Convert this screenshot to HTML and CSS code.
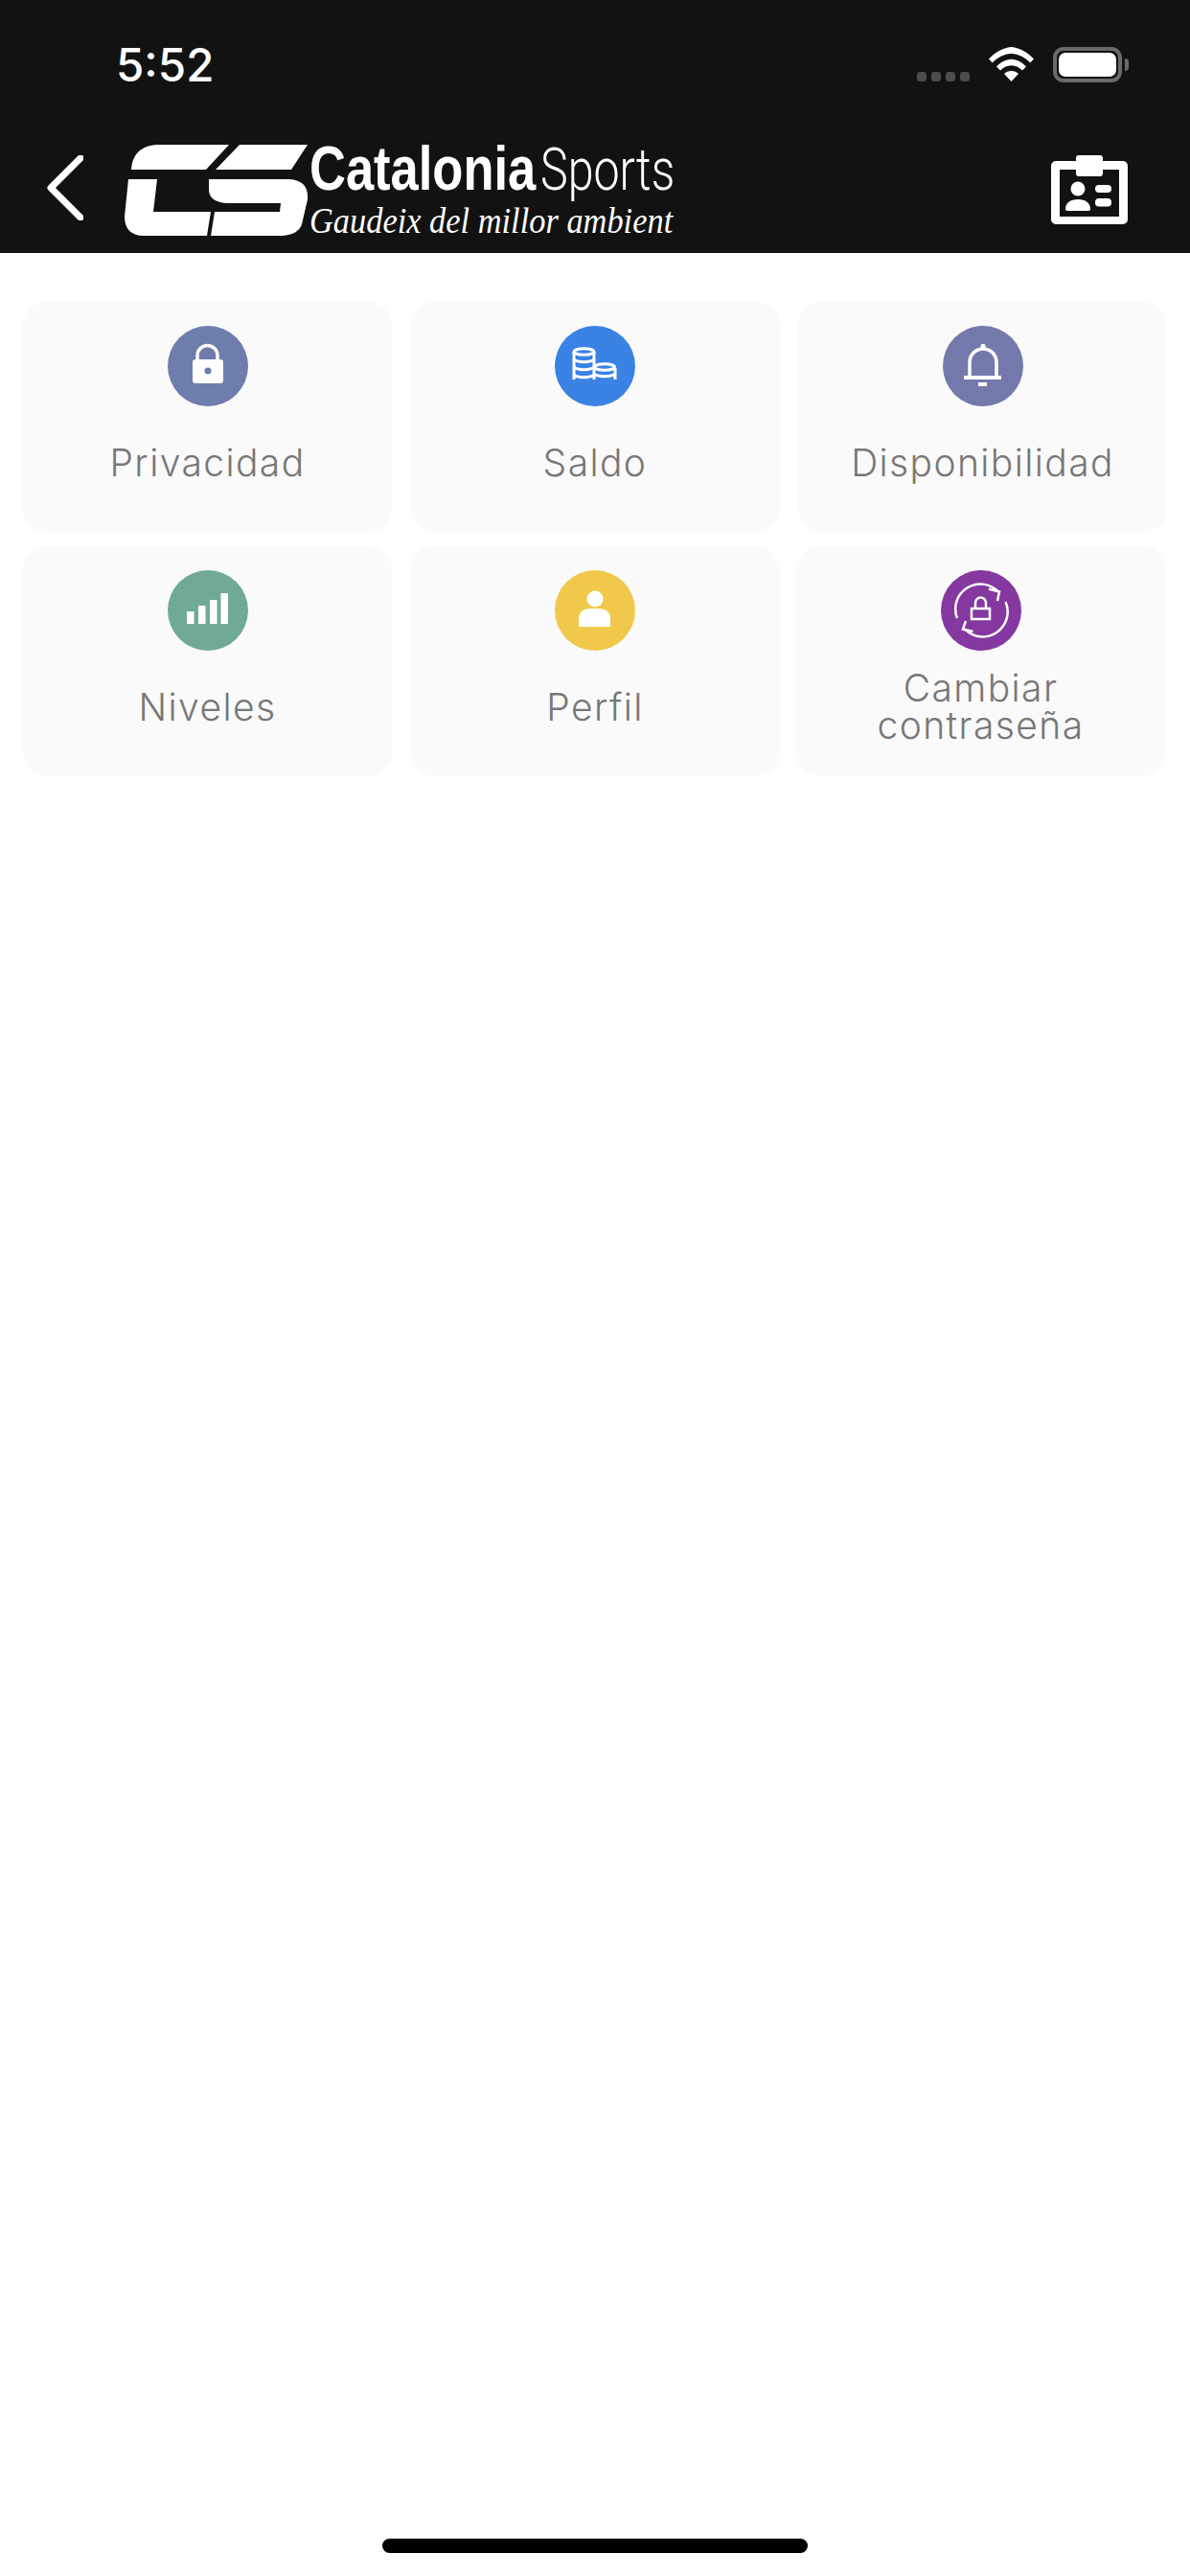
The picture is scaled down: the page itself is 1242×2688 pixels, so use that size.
FILE: index.html
```html
<!DOCTYPE html>
<html lang="es">
<head>
<meta charset="utf-8">
<title>Catalonia Sports</title>
<link rel="stylesheet" href="styles.css">
</head>
<body>
<div class="screen">
  <header class="top">
    <div class="status">
      <span class="time">5:52</span>
      <div class="status-right">
        <div class="dots"><i></i><i></i><i></i><i></i></div>
        <svg class="wifi" viewBox="0 0 47 36" width="47" height="36"><path d="M0 12.5C6 6 14 1 23.5 0 33 1 41 6 47 12.5l-3.7 4C38 11 31 7.2 23.5 7 16 7.2 9 11 3.700 16.500Z" fill="#fff"/><path d="M8 20.500C12 16 17.500 13 23.500 12.700 29.500 13 35 16 39 20.500l-4 4C31.500 21 27.500 19.500 23.500 19.300 19.500 19.500 15.500 21 12 24.500Z" fill="#fff"/><path d="M23.500 25c3 0 5.500 1 7.500 3l-7.500 8-7.500-8c2-2 4.500-3 7.500-3Z" fill="#fff"/></svg>
        <div class="battery"><div class="battery-fill"></div></div>
        <div class="battery-nub"></div>
      </div>
    </div>
    <nav class="nav">
      <svg class="back" viewBox="0 0 38 68" width="38" height="68"><path d="M35 3 4 34l31 31" fill="none" stroke="#fff" stroke-width="7" stroke-linecap="round" stroke-linejoin="round"/></svg>
      <div class="logo">
        <svg class="cs" viewBox="0 0 192 96" width="192" height="96">
          <g fill="#fff">
            <path d="M7 27C8 10 18 2 34 1H109L85 27Z"/>
            <path d="M4 37H34L30 71H90L86 96H20C6 96 0 88 0 76Z"/>
            <path d="M120 1H191L174 27H95Z"/>
            <path d="M88 37H172C186 38 192 45 191 58L185 84C183 91 175 96 163 96H90L94 71H162L163 62H106C94 61 88 56 88 48Z"/>
          </g>
        </svg>
        <div class="wordmark">
          <div class="brand"><span class="brand-a">Catalonia</span><span class="brand-b">Sports</span></div>
          <div class="tagline">Gaudeix del millor ambient</div>
        </div>
      </div>
      <svg class="idcard" viewBox="0 0 80 72" width="80" height="72">
        <path fill-rule="evenodd" fill="#fff" d="M5 6H26V3A3 3 0 0 1 29 0H51A3 3 0 0 1 54 3V6H75A5 5 0 0 1 80 11V67A5 5 0 0 1 75 72H5A5 5 0 0 1 0 67V11A5 5 0 0 1 5 6ZM9 15V64H71V15H54V19A3 3 0 0 1 51 22H29A3 3 0 0 1 26 19V15Z"/>
        <circle cx="28" cy="35" r="7.500" fill="#fff"/>
        <path d="M15 56C15 50 20 46 28 46S41 50 41 56Q41 58 39 58H17Q15 58 15 56Z" fill="#fff"/>
        <rect x="46" y="31" width="17" height="8" rx="4" fill="#fff"/>
        <rect x="46" y="45" width="17" height="8.500" rx="4" fill="#fff"/>
      </svg>
    </nav>
  </header>

  <main class="grid">
    <a class="card">
      <svg class="icon" viewBox="0 0 84 84"><circle cx="42" cy="42" r="42" fill="#6e7dab"/><path d="M31 36V31A10.500 10.500 0 0 1 52 31V36" fill="none" stroke="#fff" stroke-width="3.500"/><path fill-rule="evenodd" d="M29 35H55A3 3 0 0 1 58 38V57A3 3 0 0 1 55 60H29A3 3 0 0 1 26 57V38A3 3 0 0 1 29 35ZM42 43.500A3.500 3.500 0 1 0 42 50.500 3.500 3.500 0 1 0 42 43.500Z" fill="#fff"/></svg>
      <span class="label">Privacidad</span>
    </a>
    <a class="card">
      <svg class="icon" viewBox="0 0 84 84"><circle cx="42" cy="42" r="42" fill="#3a82e4"/><g fill="none" stroke="#fff" stroke-width="3"><path d="M20 27V56M41 27V56M63 44V56"/><ellipse cx="30.500" cy="27" rx="10.500" ry="3.200"/><path d="M20 35C23 38.500 38 38.500 41 35M20 43C23 46.500 38 46.500 41 43M20 51C23 54.500 38 54.500 41 51"/><ellipse cx="52" cy="43" rx="10.500" ry="3.200"/><path d="M41 50C44 53.500 60 53.500 63 50"/></g></svg>
      <span class="label">Saldo</span>
    </a>
    <a class="card">
      <svg class="icon" viewBox="0 0 84 84"><circle cx="42" cy="42" r="42" fill="#7379ab"/><path d="M28 54V38A14 14 0 0 1 56 38V54" fill="none" stroke="#fff" stroke-width="3.500"/><rect x="22" y="52" width="39" height="4" fill="#fff"/><rect x="39.500" y="19" width="5" height="6" rx="1.500" fill="#fff"/><rect x="37" y="59" width="9" height="4" fill="#fff"/></svg>
      <span class="label">Disponibilidad</span>
    </a>
    <a class="card">
      <svg class="icon" viewBox="0 0 84 84"><circle cx="42" cy="42" r="42" fill="#70aa96"/><g fill="#fff"><rect x="20" y="43" width="7.500" height="13"/><rect x="32" y="37" width="7.500" height="19"/><rect x="44" y="31" width="7.500" height="25"/><rect x="55.500" y="24" width="7.500" height="32"/></g></svg>
      <span class="label">Niveles</span>
    </a>
    <a class="card">
      <svg class="icon" viewBox="0 0 84 84"><circle cx="42" cy="42" r="42" fill="#f0c84b"/><circle cx="42" cy="30" r="8.500" fill="#fff"/><path d="M25 59V50C25 44 30 40 37 40H46C53 40 58 44 58 50V59Z" fill="#fff"/></svg>
      <span class="label">Perfil</span>
    </a>
    <a class="card card-shift">
      <svg class="icon" viewBox="0 0 84 84"><circle cx="42" cy="42" r="42" fill="#8438a0"/><g fill="none" stroke="#fff" stroke-width="2.500"><path d="M17 50A26 26 0 0 1 60 22.500"/><path d="M50 19.500 61 22.500 59 32"/><path d="M67.500 33A26 26 0 0 1 25 61.500"/><path d="M33.500 64 23 61.500 26 53"/><rect x="32" y="40" width="19" height="11"/><path d="M36 40V34A5.500 5.500 0 0 1 47 34V40"/></g></svg>
      <span class="label">Cambiar contraseña</span>
    </a>
  </main>

  <div class="home-bar"></div>
</div>
</body>
</html>
```
FILE: styles.css
```css
* { box-sizing: border-box; }
html, body { margin: 0; padding: 0; background: #fff; }
.screen {
  width: 1242px;
  height: 2688px;
  display: flex;
  flex-direction: column;
  background: #fff;
}
.top {
  height: 264px;
  background: #121212;
  flex: none;
  display: flex;
  flex-direction: column;
}
.status {
  height: 130px;
  display: flex;
  justify-content: space-between;
  padding: 38px 64px 0 121px;
}
.time {
  font-family: Inter, sans-serif;
  font-weight: 500;
  font-size: 47.500px;
  line-height: 60px;
  color: #fff;
}
.status-right {
  display: flex;
  align-items: flex-start;
  padding-top: 11px;
}
.dots {
  display: flex;
  gap: 5px;
  margin-top: 26px;
  margin-right: 20px;
}
.dots i {
  display: block;
  width: 10px;
  height: 10px;
  border-radius: 3px;
  background: #4c4c4c;
}
.wifi { display: block; }
.battery {
  width: 72px;
  height: 37px;
  margin-left: 20px;
  border: 4px solid #6a6a6a;
  border-radius: 11px;
  padding: 2px;
}
.battery-fill {
  width: 100%;
  height: 100%;
  background: #fff;
  border-radius: 7px;
}
.battery-nub {
  width: 4px;
  height: 13px;
  margin: 12px 0 0 3px;
  background: #6a6a6a;
  border-radius: 0 4px 4px 0;
}
.nav {
  display: flex;
  align-items: flex-start;
  padding-left: 49px;
  flex: 1;
}
.back { margin-top: 32px; flex: none; }
.logo {
  display: flex;
  margin-left: 43px;
  margin-top: 20px;
  width: 574px;
  flex: none;
}
.cs { display: block; flex: none; }
.wordmark {
  margin-left: 1px;
  margin-top: -6px;
  flex: none;
  width: 381px;
}
.brand {
  display: flex;
  height: 71px;
  align-items: baseline;
  line-height: 64px;
}
.brand-a {
  font-family: "Liberation Sans", sans-serif;
  font-weight: 700;
  font-size: 64px;
  color: #fff;
  display: inline-block;
  width: 241px;
  white-space: nowrap;
  transform: scaleX(0.82);
  transform-origin: 0 50%;
}
.brand-b {
  font-family: Roboto, sans-serif;
  font-weight: 300;
  font-size: 62px;
  color: #fff;
  display: inline-block;
  white-space: nowrap;
  transform: scaleX(0.78);
  transform-origin: 0 50%;
}
.tagline {
  font-family: "Liberation Serif", serif;
  font-style: italic;
  font-size: 38px;
  line-height: 30px;
  color: #fff;
  white-space: nowrap;
  transform: scaleX(0.905);
  transform-origin: 0 50%;
}
.idcard { margin-left: 393px; margin-top: 32px; flex: none; }

.grid {
  display: grid;
  grid-template-columns: repeat(3, 385px);
  grid-auto-rows: 240px;
  column-gap: 19.500px;
  row-gap: 15px;
  padding: 51px 0 0 24px;
}
.card {
  display: flex;
  flex-direction: column;
  align-items: center;
  background: #fafafa;
  border-radius: 24px;
  padding-top: 25px;
}
.card-shift { transform: translateX(-2px); }
.icon {
  display: block;
  width: 84px;
  height: 84px;
  flex: none;
}
.label {
  flex: 1;
  display: flex;
  align-items: center;
  justify-content: center;
  text-align: center;
  margin: 10px 0 25px;
  width: 300px;
  font-family: Inter, sans-serif;
  font-weight: 300;
  font-size: 39px;
  line-height: 39px;
  letter-spacing: 1.400px;
  color: #777;
}
.home-bar {
  margin: auto auto 24px;
  width: 444px;
  height: 15px;
  border-radius: 8px;
  background: #000;
}
```
